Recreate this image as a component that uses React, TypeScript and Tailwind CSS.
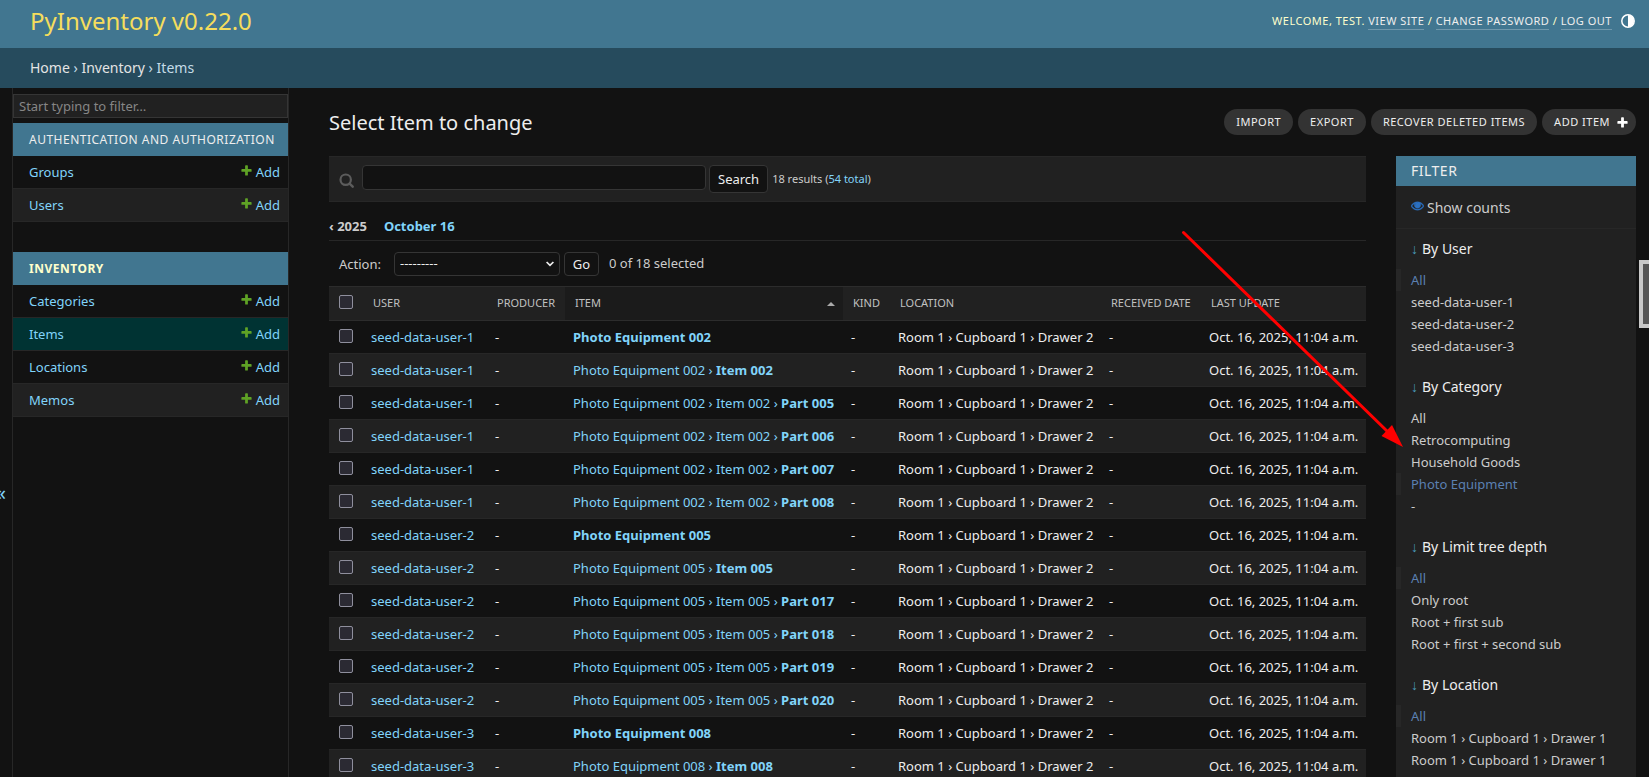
import { Fragment } from "react";

const ADD_PATH =
  "M1600 796v192q0 40-28 68t-68 28h-416v416q0 40-28 68t-68 28h-192q-40 0-68-28t-28-68v-416h-416q-40 0-68-28t-28-68v-192q0-40 28-68t68-28h416v-416q0-40 28-68t68-28h192q40 0 68 28t28 68v416h416q40 0 68 28t28 68z";

function PlusIcon({ className }: { className: string }) {
  return (
    <svg viewBox="0 0 1792 1792" className={className} fill="currentColor" aria-hidden="true">
      <path d={ADD_PATH} />
    </svg>
  );
}

function SearchIcon() {
  return (
    <svg viewBox="0 0 15 15" className="mt-[2px] size-[15px] shrink-0 text-[#5c5c5c]" fill="none" stroke="currentColor" aria-hidden="true">
      <circle cx="6.7" cy="6.7" r="5.2" strokeWidth="2.2" />
      <path d="M10.600 10.600 13.700 13.700" strokeWidth="2.400" strokeLinecap="round" />
    </svg>
  );
}

function EyeIcon() {
  return (
    <svg viewBox="0 0 1792 1792" className="mb-[5px] size-[13px] text-[#2b70c0]" fill="currentColor" stroke="currentColor" strokeWidth="50" aria-hidden="true">
      <path d="M1664 960q-152-236-381-353 61 104 61 225 0 185-131.500 316.500t-316.500 131.500-316.500-131.500-131.500-316.500q0-121 61-225-229 117-381 353 133 205 333.500 326.500t434.500 121.500 434.500-121.500 333.500-326.500zm-720-384q0-20-14-34t-34-14q-125 0-214.500 89.500t-89.500 214.500q0 20 14 34t34 14 34-14 14-34q0-86 61-147t147-61q20 0 34-14t14-34zm848 384q0 34-20 69-140 230-376.500 368.500t-499.500 138.500-499.500-139-376.500-368q-20-35-20-69t20-69q140-229 376.500-368t499.500-139 499.500 139 376.500 368q20 35 20 69z" />
      <circle cx="896" cy="832" r="300" />
    </svg>
  );
}

function ThemeIcon() {
  return (
    <svg viewBox="0 0 14 14" className="size-[14px]" aria-hidden="true">
      <circle cx="7" cy="7" r="6.200" fill="none" stroke="#ffffff" strokeWidth="1.500" />
      <path d="M7 1a6 6 0 0 1 0 12z" fill="#ffffff" />
    </svg>
  );
}

const apps = [
  { name: "Authentication and Authorization", current: false, models: ["Groups", "Users"] },
  { name: "Inventory", current: true, models: ["Categories", "Items", "Locations", "Memos"] },
];

const rows: { user: string; path: string[] }[] = [
  { user: "seed-data-user-1", path: ["Photo Equipment 002"] },
  { user: "seed-data-user-1", path: ["Photo Equipment 002", "Item 002"] },
  { user: "seed-data-user-1", path: ["Photo Equipment 002", "Item 002", "Part 005"] },
  { user: "seed-data-user-1", path: ["Photo Equipment 002", "Item 002", "Part 006"] },
  { user: "seed-data-user-1", path: ["Photo Equipment 002", "Item 002", "Part 007"] },
  { user: "seed-data-user-1", path: ["Photo Equipment 002", "Item 002", "Part 008"] },
  { user: "seed-data-user-2", path: ["Photo Equipment 005"] },
  { user: "seed-data-user-2", path: ["Photo Equipment 005", "Item 005"] },
  { user: "seed-data-user-2", path: ["Photo Equipment 005", "Item 005", "Part 017"] },
  { user: "seed-data-user-2", path: ["Photo Equipment 005", "Item 005", "Part 018"] },
  { user: "seed-data-user-2", path: ["Photo Equipment 005", "Item 005", "Part 019"] },
  { user: "seed-data-user-2", path: ["Photo Equipment 005", "Item 005", "Part 020"] },
  { user: "seed-data-user-3", path: ["Photo Equipment 008"] },
  { user: "seed-data-user-3", path: ["Photo Equipment 008", "Item 008"] },
];

const filters = [
  { title: "By User", selected: 0, options: ["All", "seed-data-user-1", "seed-data-user-2", "seed-data-user-3"] },
  { title: "By Category", selected: 3, options: ["All", "Retrocomputing", "Household Goods", "Photo Equipment", "-"] },
  { title: "By Limit tree depth", selected: 0, options: ["All", "Only root", "Root + first sub", "Root + first + second sub"] },
  { title: "By Location", selected: 0, options: ["All", "Room 1 › Cupboard 1 › Drawer 1", "Room 1 › Cupboard 1 › Drawer 1"] },
];

const LINK = "text-[#81d4fa]";
const TOOL =
  "flex h-[26px] items-center rounded-full bg-[#333333] px-3 text-[11px] tracking-[0.5px] text-[#eeeeee] uppercase";
const CHECK =
  "block size-[14px] appearance-none rounded-xs border border-[#8f8f9d] bg-[#2b2a33] checked:bg-[#81d4fa]";
const TOPLINK = "border-b border-white/25 pb-px text-[#eeeeee]";

function Sidebar() {
  return (
    <nav className="flex w-[277px] shrink-0 flex-col border-x border-[#272727] pt-[6px]" aria-label="Applications">
      <input
        type="search"
        aria-label="Filter navigation items"
        placeholder="Start typing to filter…"
        className="mb-[5px] h-6 border border-[#353535] bg-[#212121] px-[5px] text-[13px] text-[#eeeeee] placeholder:text-[#868686]"
      />
      {apps.map((app) => (
        <section key={app.name} className="mb-[30px]">
          <h2
            className={
              app.current
                ? "bg-[#417690] px-4 text-[12px] leading-[33px] font-bold tracking-[0.5px] text-[#ffffcc] uppercase"
                : "bg-[#417690] px-4 text-[12px] leading-[33px] tracking-[0.5px] whitespace-nowrap text-[#eeeeee] uppercase"
            }
          >
            <a href="#app">{app.name}</a>
          </h2>
          <ul>
            {app.models.map((model, i) => (
              <li
                key={model}
                className={`flex h-[33px] items-center justify-between border-b border-[#272727] pt-[2px] pr-2 pl-4 text-[13px] ${LINK} ${
                  model === "Items" ? "bg-[#003333]" : i % 2 ? "bg-[#212121]" : "bg-[#121212]"
                }`}
              >
                <a href="#model">{model}</a>
                <a href="#add" className="flex items-center gap-[3px]">
                  <PlusIcon className="mb-[5px] size-[13px] text-[#5fa225]" />
                  Add
                </a>
              </li>
            ))}
          </ul>
        </section>
      ))}
    </nav>
  );
}

function ResultTable() {
  const th = "px-[10px] text-left text-[11px] font-normal text-[#c0c0c0] uppercase whitespace-nowrap";
  const td = "px-2 pt-px whitespace-nowrap";
  return (
    <table className="w-full table-fixed border-collapse text-[13px]">
      <colgroup>
        <col className="w-[34px]" />
        <col className="w-[124px]" />
        <col className="w-[78px]" />
        <col className="w-[278px]" />
        <col className="w-[47px]" />
        <col className="w-[211px]" />
        <col className="w-[100px]" />
        <col className="w-[165px]" />
      </colgroup>
      <thead>
        <tr className="h-[34px] border-y border-[#2c2c2c] bg-[#212121]">
          <th className="pb-[3px] pl-[10px]">
            <input type="checkbox" aria-label="Select all items" className={CHECK} />
          </th>
          <th className={th}>User</th>
          <th className={th}>Producer</th>
          <th className={`${th} bg-[#1b1b1b]`} aria-sort="ascending">
            <span className="-mr-[2px] flex items-center justify-between">
              Item
              <svg viewBox="0 0 8 4" className="h-1 w-2" fill="#aaaaaa" aria-hidden="true">
                <path d="M0 4 4 0 8 4z" />
              </svg>
            </span>
          </th>
          <th className={th}>Kind</th>
          <th className={th}>Location</th>
          <th className={th}>Received date</th>
          <th className={th}>Last update</th>
        </tr>
      </thead>
      <tbody className="text-[#eeeeee]">
        {rows.map((row, i) => (
          <tr key={i} className="h-[33px] border-b border-[#272727] odd:bg-[#121212] even:bg-[#212121]">
            <td className="pb-[3px] pl-[10px]">
              <input type="checkbox" aria-label={`Select ${row.path.join(" › ")}`} className={CHECK} />
            </td>
            <td className={td}>
              <a href="#user" className={LINK}>{row.user}</a>
            </td>
            <td className={td}>-</td>
            <td className={td}>
              <a href="#item" className={LINK}>
                {row.path.map((part, k) => (
                  <Fragment key={k}>
                    {k > 0 && " › "}
                    {k === row.path.length - 1 ? <strong>{part}</strong> : part}
                  </Fragment>
                ))}
              </a>
            </td>
            <td className={td}>-</td>
            <td className={td}>Room 1 › Cupboard 1 › Drawer 2</td>
            <td className={td}>-</td>
            <td className={td}>Oct. 16, 2025, 11:04 a.m.</td>
          </tr>
        ))}
      </tbody>
    </table>
  );
}

function FilterPanel() {
  return (
    <aside className="w-60 shrink-0 bg-[#212121]" aria-label="Filter">
      <h2 className="bg-[#417690] px-[15px] text-sm leading-[30px] tracking-[0.5px] text-[#eeeeee] uppercase">Filter</h2>
      <div className="flex h-[43px] items-center border-b border-[#272727] px-[15px] pt-[2px] text-sm text-[#cccccc]">
        <a href="#counts" className="flex items-center gap-[3px]">
          <EyeIcon />
          Show counts
        </a>
      </div>
      {filters.map((f) => (
        <details key={f.title} open className="pb-[10px]">
          <summary className="flex h-10 list-none items-center px-[15px] text-sm text-[#eeeeee]">
            <span className="mr-1 text-[#4a9cbc]">↓</span>
            {f.title}
          </summary>
          <ul className="text-[13px] leading-[22px]">
            {f.options.map((o, i) => (
              <li
                key={i}
                className={
                  i === f.selected
                    ? "border-l-[5px] border-[#272727] pl-[10px] text-[#5b80b2]"
                    : "pl-[15px] text-[#cccccc]"
                }
              >
                <a href="#filter">{o}</a>
              </li>
            ))}
          </ul>
        </details>
      ))}
    </aside>
  );
}

export default function App() {
  return (
    <div className="relative flex h-screen flex-col overflow-hidden bg-[#121212] font-['Noto_Sans',sans-serif] text-[#eeeeee]">
      <header className="flex h-12 shrink-0 items-center justify-between bg-[#417690] pr-[14px] pb-[6px] pl-[30px]">
        <h1 className="text-2xl text-[#f5dd5d]">
          <a href="#home">PyInventory v0.22.0</a>
        </h1>
        <div className="flex items-center gap-[9px] text-[11px] tracking-[0.5px] text-[#ffffcc] uppercase">
          <p>
            Welcome, test. <a href="#site" className={TOPLINK}>View site</a> /{" "}
            <a href="#password" className={TOPLINK}>Change password</a> /{" "}
            <a href="#logout" className={TOPLINK}>Log out</a>
          </p>
          <button type="button" aria-label="Toggle theme">
            <ThemeIcon />
          </button>
        </div>
      </header>
      <nav className="flex h-10 shrink-0 items-center bg-[#264b5d] px-[30px] text-sm text-[#c4dce8]" aria-label="Breadcrumbs">
        <p>
          <a href="#home" className="text-[#e4e4e4]">Home</a> ›{" "}
          <a href="#inventory" className="text-[#e4e4e4]">Inventory</a> › Items
        </p>
      </nav>
      <div className="flex min-h-0 flex-1">
        <button type="button" aria-label="Toggle navigation" className={`flex w-3 shrink-0 items-center justify-end overflow-hidden pt-[120px] pr-[6px] text-xl ${LINK}`}>
          «
        </button>
        <Sidebar />
        <main className="min-w-0 flex-1 pt-5 pr-[13px] pl-10">
          <div className="mb-5 flex h-7 items-start justify-between">
            <h2 className="text-xl leading-[30px]">Select Item to change</h2>
            <div className="flex gap-[5px] pt-px">
              <a href="#import" className={TOOL}>Import</a>
              <a href="#export" className={TOOL}>Export</a>
              <a href="#recover" className={TOOL}>Recover deleted items</a>
              <a href="#additem" className={`${TOOL} gap-[6px] pr-[7px]`}>
                Add item
                <PlusIcon className="size-[13px] text-white" />
              </a>
            </div>
          </div>
          <div className="flex items-start gap-[30px]">
            <div className="min-w-0 flex-1">
              <form className="flex h-[46px] items-center border-y border-[#272727] bg-[#212121] px-[10px]" onSubmit={(e) => e.preventDefault()}>
                <SearchIcon />
                <input
                  type="text"
                  aria-label="Search items"
                  className="mb-[3px] ml-2 h-[25px] w-[344px] rounded-sm border border-[#353535] bg-[#121212] px-[5px] text-[13px]"
                />
                <button type="submit" className="ml-[3px] h-7 rounded-sm border border-[#353535] bg-[#121212] px-2 pt-px text-[13px]">
                  Search
                </button>
                <span className="ml-1 text-[11px] text-[#cccccc]">
                  18 results (<a href="#all" className={LINK}>54 total</a>)
                </span>
              </form>
              <nav className="flex h-[39px] items-end gap-[17px] border-b border-[#272727] pb-1 text-[13px] font-bold" aria-label="Dates">
                <a href="#year" className="text-[#cccccc]">‹ 2025</a>
                <a href="#day" className={LINK}>October 16</a>
              </nav>
              <form className="flex h-[45px] items-center px-[10px] text-[13px] text-[#cccccc]" onSubmit={(e) => e.preventDefault()}>
                <label htmlFor="action" className="pt-[2px]">Action:</label>
                <span className="relative ml-[13px] flex items-center">
                  <select id="action" className="h-6 w-[166px] appearance-none rounded-sm border border-[#353535] bg-[#121212] px-[5px] text-[13px] text-[#eeeeee]">
                    <option>---------</option>
                  </select>
                  <svg viewBox="0 0 8 6" className="pointer-events-none absolute right-[6px] h-[6px] w-2" fill="none" stroke="#eeeeee" strokeWidth="1.700" aria-hidden="true">
                    <path d="M.6 1 4 4.400 7.400 1" />
                  </svg>
                </span>
                <button type="submit" className="ml-1 h-6 w-[35px] rounded-sm border border-[#353535] bg-[#121212] pt-[2px] text-[#eeeeee]">
                  Go
                </button>
                <span className="ml-[10px]">0 of 18 selected</span>
              </form>
              <ResultTable />
            </div>
            <FilterPanel />
          </div>
        </main>
      </div>
      <div className="absolute top-[260px] right-0 h-[68px] w-[10px] border-4 border-r-0 border-[#c8c8c8] bg-[#555555]" />
      <svg className="pointer-events-none absolute top-[228px] left-[1178px] h-[240px] w-[230px]" viewBox="1178 228 230 240" aria-hidden="true">
        <path d="M1183.500 232.500 1388 432" stroke="#ff0000" strokeWidth="3" strokeLinecap="round" />
        <path d="M1403 447 1381.500 436 1392 425z" fill="#ff0000" />
      </svg>
    </div>
  );
}
